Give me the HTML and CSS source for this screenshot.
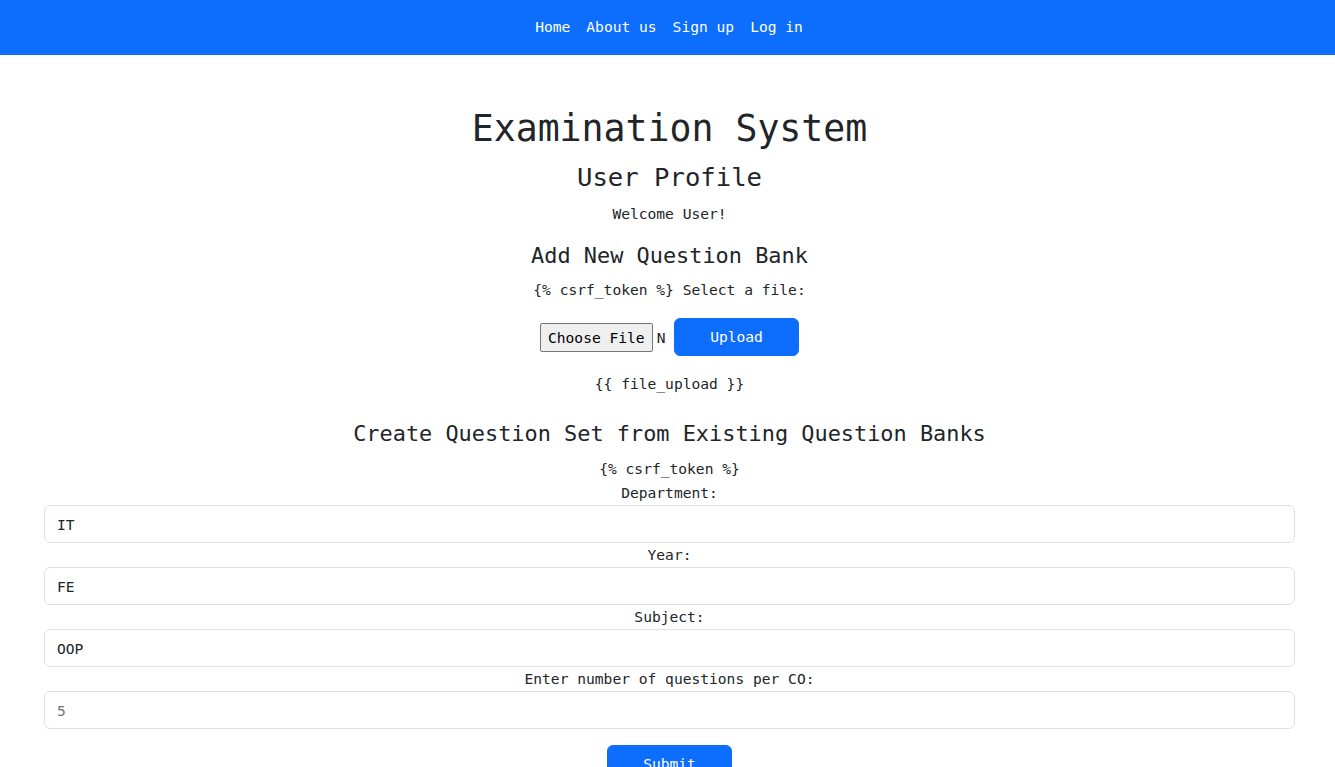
FILE: index.html
```html
<!DOCTYPE html>
<html lang="en">
<head>
<meta charset="utf-8">
<title>Examination System</title>
<link rel="stylesheet" href="styles.css">
</head>
<body>
<nav class="navbar">
  <ul class="nav">
    <li><a class="nav-link" href="#">Home</a></li>
    <li><a class="nav-link" href="#">About us</a></li>
    <li><a class="nav-link" href="#">Sign up</a></li>
    <li><a class="nav-link" href="#">Log in</a></li>
  </ul>
</nav>
<main class="page">
  <h1 class="title">Examination System</h1>
  <h3 class="subtitle">User Profile</h3>
  <p class="text">Welcome User!</p>

  <h4 class="section-title">Add New Question Bank</h4>
  <form class="upload-form">
    <p class="text">{% csrf_token %} Select a file:</p>
    <div class="upload-row">
      <div class="file-input"><span class="file-btn">Choose File</span><span class="file-name">No file chosen</span></div>
      <button class="btn" type="button">Upload</button>
    </div>
    <p class="text">{{ file_upload }}</p>
  </form>

  <h4 class="section-title">Create Question Set from Existing Question Banks</h4>
  <form class="set-form">
    <p class="text text-tight">{% csrf_token %}</p>
    <label class="label" for="dept">Department:</label>
    <input class="field" id="dept" type="text" value="IT">
    <label class="label" for="year">Year:</label>
    <input class="field" id="year" type="text" value="FE">
    <label class="label" for="subject">Subject:</label>
    <input class="field" id="subject" type="text" value="OOP">
    <label class="label" for="count">Enter number of questions per CO:</label>
    <input class="field" id="count" type="text" placeholder="5">
    <button class="btn btn-submit" type="button">Submit</button>
  </form>
</main>
</body>
</html>
```
FILE: styles.css
```css
html, body {
  margin: 0;
  padding: 0;
}

body {
  font-family: "DejaVu Sans Mono", "Liberation Mono", monospace;
  color: #212529;
  background: #ffffff;
}

.navbar {
  background: #0d6efd;
  height: 55px;
  display: flex;
  justify-content: center;
  align-items: center;
  padding-left: 3px;
}

.nav {
  list-style: none;
  margin: 0 0 2px;
  padding: 0;
  display: flex;
}

.nav-link {
  display: block;
  padding: 8px;
  color: #ffffff;
  text-decoration: none;
  font-size: 14.6px;
  line-height: 24px;
}

.page {
  padding: 0 40px 0 44px;
  text-align: center;
}

.title {
  margin: 50px 0 8px;
  font-size: 36.5px;
  line-height: 48px;
  font-weight: 400;
}

.subtitle {
  margin: 0 0 7px;
  font-size: 25.6px;
  line-height: 33.6px;
  font-weight: 400;
}

.section-title {
  margin: 0 0 8px;
  font-size: 21.9px;
  line-height: 28.8px;
  font-weight: 400;
}

.text {
  margin: 0 0 16px;
  font-size: 14.6px;
  line-height: 24px;
}

.text-tight {
  margin-bottom: 0;
}

.upload-form {
  margin-bottom: 24px;
}

.upload-row {
  display: flex;
  justify-content: center;
  align-items: center;
  gap: 9px;
  margin-bottom: 16px;
}

.file-input {
  width: 125px;
  overflow: hidden;
  white-space: nowrap;
  display: flex;
  align-items: center;
  gap: 4px;
}

.file-btn {
  flex-shrink: 0;
  background: #efefef;
  border: 1px solid #767676;
  border-radius: 2px;
  padding: 0 7px;
  height: 29px;
  line-height: 27px;
  box-sizing: border-box;
  font-size: 14.6px;
  color: #000000;
}

.file-name {
  font-size: 14.6px;
  color: #212529;
}

.btn {
  width: 125px;
  height: 38px;
  box-sizing: border-box;
  background: #0d6efd;
  color: #ffffff;
  border: 1px solid #0d6efd;
  border-radius: 6px;
  font-family: inherit;
  font-size: 14.6px;
  line-height: 24px;
  padding: 6px 12px;
  cursor: pointer;
}

.label {
  display: block;
  font-size: 14.6px;
  line-height: 24px;
}

.field {
  display: block;
  width: 100%;
  height: 38px;
  box-sizing: border-box;
  border: 1px solid #dee2e6;
  border-radius: 6px;
  padding: 6px 12px;
  font-family: inherit;
  font-size: 14.6px;
  line-height: 24px;
  color: #212529;
  background: #ffffff;
  text-align: left;
  margin: 0;
}

.field::placeholder {
  color: #6c757d;
  opacity: 1;
}

.btn-submit {
  margin-top: 16px;
}
```
